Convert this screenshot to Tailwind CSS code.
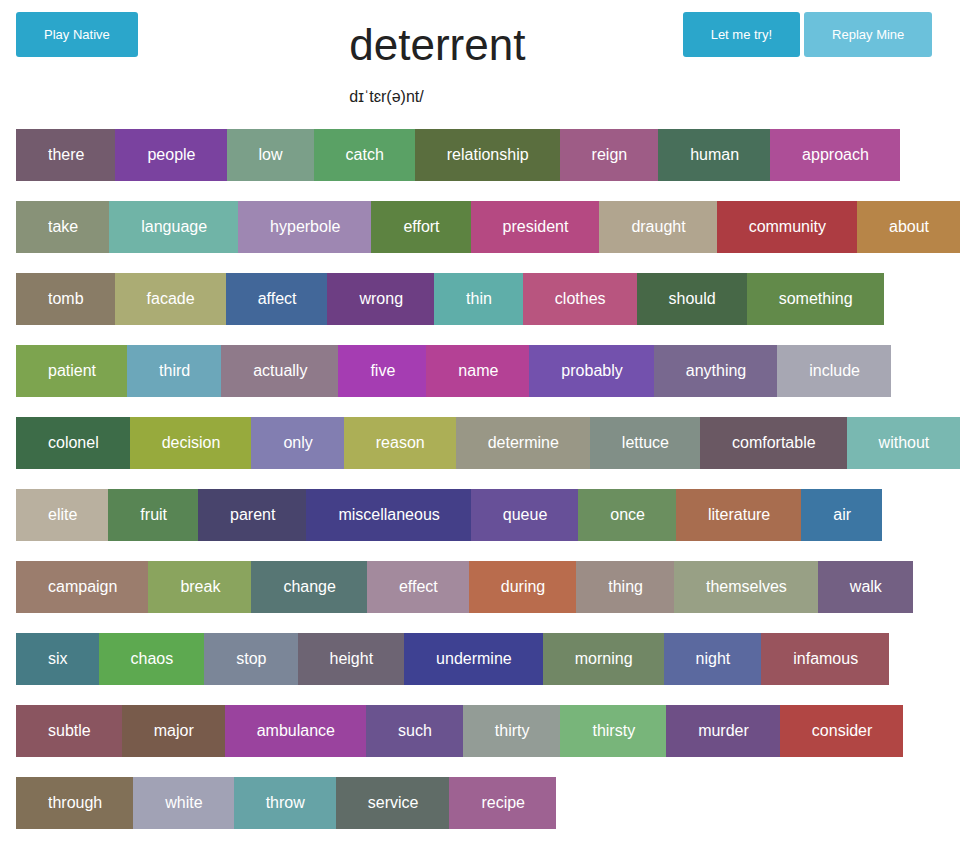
<!DOCTYPE html>
<html lang="en">
<head>
<meta charset="utf-8">
<meta name="viewport" content="width=device-width, initial-scale=1">
<title>deterrent</title>
<script src="https://cdn.jsdelivr.net/npm/@tailwindcss/browser@4"></script>
</head>
<body class="bg-white font-['Liberation_Sans',Arial,sans-serif] text-[#222222]">
<main class="pt-3 pl-4">
  <header class="grid grid-cols-3 gap-x-[51px]">
    <div>
      <button type="button" class="h-[45px] rounded-[3px] bg-[#2ba6cb] px-7 text-[13px] text-white">Play Native</button>
    </div>
    <div>
      <h1 class="mt-[9px] text-[44px] leading-12">deterrent</h1>
      <p class="mt-4 text-base leading-6">dɪˈtɛr(ə)nt/</p>
    </div>
    <div class="flex items-start gap-1 whitespace-nowrap">
      <button type="button" class="h-[45px] rounded-[3px] bg-[#2ba6cb] px-7 text-[13px] text-white">Let me try!</button>
      <button type="button" disabled class="h-[45px] rounded-[3px] bg-[#6bc1db] px-7 text-[13px] text-white">Replay Mine</button>
    </div>
  </header>
  <nav aria-label="Words" class="mt-5 flex flex-wrap gap-y-5 pb-3.5 text-base text-white *:h-13 *:pl-8 *:pr-[31px]">
    <button type="button" class="bg-[#735b6d]">there</button>
    <button type="button" class="bg-[#7a429f]">people</button>
    <button type="button" class="bg-[#7b9f89]">low</button>
    <button type="button" class="bg-[#5aa165]">catch</button>
    <button type="button" class="bg-[#5a6e3e]">relationship</button>
    <button type="button" class="bg-[#9e5c86]">reign</button>
    <button type="button" class="bg-[#486f5a]">human</button>
    <button type="button" class="bg-[#ad4e97]">approach</button>
    <button type="button" class="bg-[#889278]">take</button>
    <button type="button" class="bg-[#70b4a7]">language</button>
    <button type="button" class="bg-[#9e87b2]">hyperbole</button>
    <button type="button" class="bg-[#5d8341]">effort</button>
    <button type="button" class="bg-[#b54982]">president</button>
    <button type="button" class="bg-[#b1a58f]">draught</button>
    <button type="button" class="bg-[#ad3c42]">community</button>
    <button type="button" class="bg-[#b78548]">about</button>
    <button type="button" class="bg-[#897c66]">tomb</button>
    <button type="button" class="bg-[#abac74]">facade</button>
    <button type="button" class="bg-[#426799]">affect</button>
    <button type="button" class="bg-[#6d3e83]">wrong</button>
    <button type="button" class="bg-[#5faea9]">thin</button>
    <button type="button" class="bg-[#b8557f]">clothes</button>
    <button type="button" class="bg-[#476847]">should</button>
    <button type="button" class="bg-[#628a4a]">something</button>
    <button type="button" class="bg-[#7da44f]">patient</button>
    <button type="button" class="bg-[#6ca7ba]">third</button>
    <button type="button" class="bg-[#8f7a8a]">actually</button>
    <button type="button" class="bg-[#a53db2]">five</button>
    <button type="button" class="bg-[#b44195]">name</button>
    <button type="button" class="bg-[#7351ad]">probably</button>
    <button type="button" class="bg-[#78688f]">anything</button>
    <button type="button" class="bg-[#a7a7b3]">include</button>
    <button type="button" class="bg-[#3d6c48]">colonel</button>
    <button type="button" class="bg-[#97aa3d]">decision</button>
    <button type="button" class="bg-[#827eb1]">only</button>
    <button type="button" class="bg-[#acaf56]">reason</button>
    <button type="button" class="bg-[#999786]">determine</button>
    <button type="button" class="bg-[#818f87]">lettuce</button>
    <button type="button" class="bg-[#6a5863]">comfortable</button>
    <button type="button" class="bg-[#79b8b1]">without</button>
    <button type="button" class="bg-[#b9b09f]">elite</button>
    <button type="button" class="bg-[#588554]">fruit</button>
    <button type="button" class="bg-[#48446c]">parent</button>
    <button type="button" class="bg-[#443f88]">miscellaneous</button>
    <button type="button" class="bg-[#675098]">queue</button>
    <button type="button" class="bg-[#6b8f5f]">once</button>
    <button type="button" class="bg-[#a86d4f]">literature</button>
    <button type="button" class="bg-[#3c76a3]">air</button>
    <button type="button" class="bg-[#9b7d6d]">campaign</button>
    <button type="button" class="bg-[#8aa45e]">break</button>
    <button type="button" class="bg-[#577674]">change</button>
    <button type="button" class="bg-[#a38a9d]">effect</button>
    <button type="button" class="bg-[#b96c4d]">during</button>
    <button type="button" class="bg-[#9c8d86]">thing</button>
    <button type="button" class="bg-[#98a085]">themselves</button>
    <button type="button" class="bg-[#736083]">walk</button>
    <button type="button" class="bg-[#467b85]">six</button>
    <button type="button" class="bg-[#5da950]">chaos</button>
    <button type="button" class="bg-[#7b8698]">stop</button>
    <button type="button" class="bg-[#6d6473]">height</button>
    <button type="button" class="bg-[#3e4192]">undermine</button>
    <button type="button" class="bg-[#718765]">morning</button>
    <button type="button" class="bg-[#5b699f]">night</button>
    <button type="button" class="bg-[#99545d]">infamous</button>
    <button type="button" class="bg-[#8a5560]">subtle</button>
    <button type="button" class="bg-[#785b4b]">major</button>
    <button type="button" class="bg-[#9a439e]">ambulance</button>
    <button type="button" class="bg-[#6a538f]">such</button>
    <button type="button" class="bg-[#939c96]">thirty</button>
    <button type="button" class="bg-[#78b57a]">thirsty</button>
    <button type="button" class="bg-[#6e4f86]">murder</button>
    <button type="button" class="bg-[#b14644]">consider</button>
    <button type="button" class="bg-[#817057]">through</button>
    <button type="button" class="bg-[#a1a2b5]">white</button>
    <button type="button" class="bg-[#66a3a6]">throw</button>
    <button type="button" class="bg-[#606c67]">service</button>
    <button type="button" class="bg-[#9e6292]">recipe</button>
  </nav>
</main>
</body>
</html>
